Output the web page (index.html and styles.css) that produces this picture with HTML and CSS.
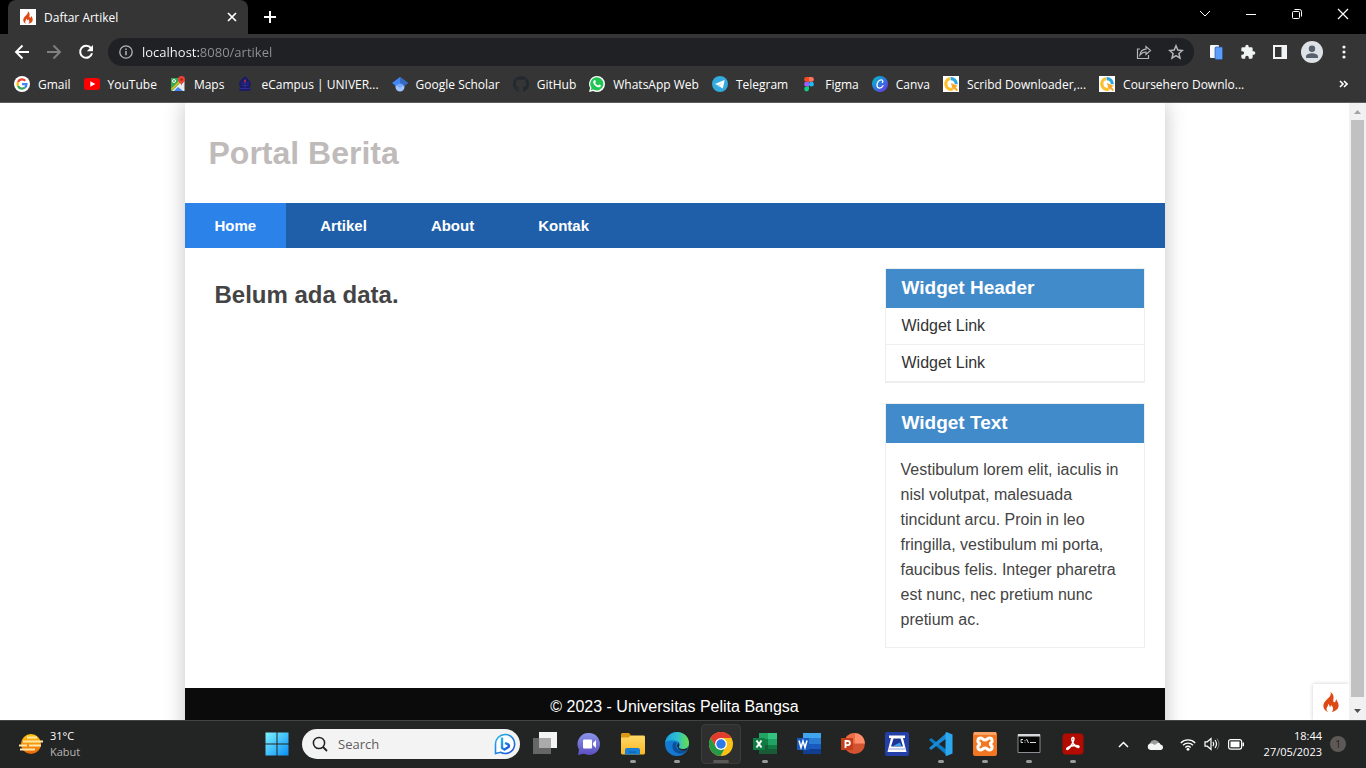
FILE: index.html
```html
<!DOCTYPE html>
<html lang="id">
<head>
<meta charset="utf-8">
<title>Daftar Artikel</title>
<link rel="stylesheet" href="styles.css">
</head>
<body>
<svg class="defs" aria-hidden="true">
  <defs>
    <symbol id="flame" viewBox="0 0 16 20"><path fill="#dd4814" d="M7.6 0c.8 2.600-.4 4.200-2.200 6C3.200 8.200.4 10.600.4 14c0 2.600 1.700 5 4.600 6-1.600-1.300-2-3.200-.8-4.900.7-1 1.100-1.700.9-3 1.300.5 1.700 1.700 1.500 2.900.9-.2 1.400-1 1.300-2.100 1.800 1 3.700 4.700.5 7.100 4-.9 7.200-3 7.200-6.600 0-2.700-1.700-4.200-2.400-6.300-.6 1.300-.4 2.200-1 2.800-.8.700-1.900.1-1.900-1C10.300 6.500 11.900 3.200 7.600 0z"/></symbol>
    <symbol id="qdown" viewBox="0 0 16 16"><path fill="#fff" d="M0 0h16v16H0z"/><path fill="none" stroke="#fbc02d" stroke-width="3.200" d="M7 2.600a5.300 5.300 0 1 0 2.500 10.600"/><path fill="none" stroke="#2aa5e0" stroke-width="3.200" d="M7.600 2.600a5.400 5.400 0 0 1 5.700 5.600"/><path fill="#f9a825" d="m8 7 7 3-2.400 1L15 14l-1.200 1.200L11 12.600l-1 2.200z"/></symbol>
    <linearGradient id="win" x1="0" y1="0" x2="1" y2="1"><stop stop-color="#7df3ff"/><stop offset="1" stop-color="#0a8ff5"/></linearGradient>
    <linearGradient id="sun" x1="0" y1="0" x2="0" y2="1"><stop stop-color="#ffc70f"/><stop offset="1" stop-color="#ee6509"/></linearGradient>
    <linearGradient id="canva" x1="0" y1="0" x2="1" y2="1"><stop stop-color="#00c4cc"/><stop offset=".5" stop-color="#2b78dc"/><stop offset="1" stop-color="#7d2ae8"/></linearGradient>
    <linearGradient id="chat" x1="0" y1="0" x2="0" y2="1"><stop stop-color="#8b94e8"/><stop offset="1" stop-color="#5a4fc0"/></linearGradient>
    <linearGradient id="edge" x1="0" y1="0" x2="1" y2="0"><stop stop-color="#1a9de0"/><stop offset=".5" stop-color="#2cc0d0"/><stop offset="1" stop-color="#6ae045"/></linearGradient>
    <linearGradient id="folder" x1="0" y1="0" x2="0" y2="1"><stop stop-color="#ffd968"/><stop offset="1" stop-color="#fbb722"/></linearGradient>
    <linearGradient id="bing" x1="0" y1="0" x2="1" y2="1"><stop stop-color="#22b8e8"/><stop offset="1" stop-color="#1a4fd8"/></linearGradient>
  </defs>
</svg>

<header class="browser">
  <div class="tabstrip">
    <div class="tab">
      <span class="favicon"><svg width="10" height="13"><use href="#flame"/></svg></span>
      <span class="tab-title">Daftar Artikel</span>
      <button class="plain tab-close" aria-label="Close tab"><svg width="10" height="10" viewBox="0 0 10 10"><path class="line" stroke-width="1.700" d="m1 1 8 8m0-8L1 9"/></svg></button>
    </div>
    <button class="plain new-tab" aria-label="New tab"><svg width="12" height="12" viewBox="0 0 12 12"><path class="line" stroke-width="2" d="M6 0v12M0 6h12"/></svg></button>
    <div class="window-buttons">
      <button class="plain" aria-label="Search tabs"><svg width="12" height="8" viewBox="0 0 12 8"><path class="line" d="m1 1 5 5 5-5"/></svg></button>
      <button class="plain" aria-label="Minimize"><svg width="10" height="10" viewBox="0 0 10 10"><path class="line" d="M0 5.500h10"/></svg></button>
      <button class="plain" aria-label="Restore"><svg width="10" height="10" viewBox="0 0 10 10"><path class="line" d="M2.500.5h5a2 2 0 0 1 2 2v5"/><rect class="line" x=".5" y="2.500" width="7" height="7" rx="1"/></svg></button>
      <button class="plain" aria-label="Close"><svg width="12" height="12" viewBox="0 0 12 12"><path class="line" stroke-width="1.200" d="m1 1 10 10m0-10L1 11"/></svg></button>
    </div>
  </div>

  <div class="toolbar">
    <button class="plain tool" aria-label="Back"><svg width="16" height="16" viewBox="0 0 16 16"><path class="line" stroke-width="1.900" d="M15 8H2m6.500-6.500L2 8l6.500 6.500"/></svg></button>
    <button class="plain tool dim" aria-label="Forward"><svg width="16" height="16" viewBox="0 0 16 16"><path class="line" stroke-width="1.900" d="M1 8h13M7.500 1.500 14 8l-6.500 6.500"/></svg></button>
    <button class="plain tool" aria-label="Reload"><svg width="16" height="16" viewBox="0 0 16 16"><path class="line" stroke-width="2" d="M13 4.200a6 6 0 1 0 1 5"/><path fill="currentColor" d="M15 1v6.200H8.800z"/></svg></button>
    <div class="omnibox">
      <svg width="14" height="14" viewBox="0 0 14 14"><circle class="line" cx="7" cy="7" r="6.200" stroke-width="1.300"/><path class="line" stroke-width="1.500" d="M7 6v4.200M7 3.500V5"/></svg>
      <input class="url" aria-label="Address" value="localhost:8080/artikel">
      <button class="plain" aria-label="Share"><svg width="16" height="16" viewBox="0 0 16 16"><path class="line" stroke-width="1.200" d="M4 5H1.500v9.500h11V11M4 11c.4-4 2.500-5.800 6-5.900V2.500l4.500 4-4.500 4V8C7.500 8 5.600 8.800 4 11z"/></svg></button>
      <button class="plain" aria-label="Bookmark"><svg width="16" height="16" viewBox="0 0 16 16"><path class="line" stroke-width="1.500" d="m8 1.800 1.800 4.300 4.600.4-3.500 3 1.100 4.600-4-2.500-4 2.500 1.100-4.600-3.500-3 4.600-.4z"/></svg></button>
    </div>
    <button class="plain ext" aria-label="Reader extension"><svg width="14" height="16" viewBox="0 0 14 16"><rect x="1" y="1" width="9" height="13" rx="1" fill="#f7f9fb"/><rect x="6" y="3" width="7.500" height="12.500" rx="1" fill="#5c9dfa" stroke="#28569a" stroke-width=".7"/></svg></button>
    <button class="plain ext" aria-label="Extensions"><svg width="16" height="16" viewBox="0 0 24 24"><path fill="#f1f3f4" d="M20.500 11H19V7a2 2 0 0 0-2-2h-4V3.500a2.500 2.500 0 0 0-5 0V5H4a2 2 0 0 0-2 2v3.800h1.500a2.700 2.700 0 0 1 0 5.400H2V20c0 1.100.9 2 2 2h3.800v-1.500a2.700 2.700 0 0 1 5.400 0V22H17a2 2 0 0 0 2-2v-4h1.500a2.500 2.500 0 0 0 0-5z"/></svg></button>
    <button class="plain ext" aria-label="Side panel"><svg width="14" height="14" viewBox="0 0 14 14"><path fill="#f1f3f4" fill-rule="evenodd" d="M0 0h14v14H0zM2 2v10h6.500V2z"/></svg></button>
    <button class="plain ext" aria-label="Profile"><svg width="22" height="22" viewBox="0 0 22 22"><circle cx="11" cy="11" r="11" fill="#dee1e6"/><circle cx="11" cy="7.800" r="3.200" fill="#56606e"/><path fill="#56606e" d="M5 17v-1.500c0-2.200 3.500-3.200 6-3.200s6 1 6 3.200V17z"/></svg></button>
    <button class="plain ext" aria-label="Menu"><svg width="4" height="14" viewBox="0 0 4 14" fill="#f1f3f4"><circle cx="2" cy="2" r="1.600"/><circle cx="2" cy="7" r="1.600"/><circle cx="2" cy="12" r="1.600"/></svg></button>
  </div>

  <nav class="bookmarks" aria-label="Bookmarks">
    <a href="#"><svg viewBox="0 0 16 16"><circle cx="8" cy="8" r="8" fill="#fff"/><g fill="none" stroke-width="2.200"><path stroke="#ea4335" d="M4 6a4.500 4.500 0 0 1 7.300-1.300"/><path stroke="#fbbc05" d="M4 10a4.600 4.600 0 0 1 0-4"/><path stroke="#34a853" d="M4 10a4.500 4.500 0 0 0 7 1.500"/><path stroke="#4285f4" d="M11 11.500a4.500 4.500 0 0 0 1.500-3.300H8"/></g></svg>Gmail</a>
    <a href="#"><svg viewBox="0 0 16 16"><rect y="2" width="16" height="12" rx="3" fill="#f00"/><path fill="#fff" d="m6.300 5.200 5 2.800-5 2.800z"/></svg>YouTube</a>
    <a href="#"><svg viewBox="0 0 16 16"><path fill="#34a853" d="M1 2h13v13H1z"/><path fill="#e8eaed" d="m2 15 11-11 1.500 1.500V15z"/><path fill="#4285f4" d="m4 15 4-4 5 4z"/><path fill="#fbbc05" d="M1 13 11 3l1 1L2 14z"/><circle cx="4" cy="5" r="1.500" fill="none" stroke="#fff"/><path fill="#ea4335" d="M11.500 0A3.500 3.500 0 0 1 15 3.500C15 6 12 7 11.500 9.500 11 7 8 6 8 3.500A3.500 3.500 0 0 1 11.500 0z"/><circle cx="11.500" cy="3.500" r="1.200" fill="#a52714"/></svg>Maps</a>
    <a href="#"><svg viewBox="0 0 16 16"><path fill="#1a1a66" d="m8 0 3 3 3 4-1 5 1 2-4 1H5l-3-1 1-2-1-5 3-4z"/><path fill="none" stroke="#34349a" stroke-width=".8" d="M4 7h8M4.500 9.500h7M3 12.500h10M8 3v9"/><circle cx="8" cy="5" r="1.200" fill="#a52a55"/></svg>eCampus | UNIVER...</a>
    <a href="#"><svg viewBox="0 0 16 16"><path fill="#a0c3ff" d="M3.500 8h9v3a4.500 4.500 0 0 1-9 0z"/><path fill="#76a7fa" d="M4 9a4.500 4.500 0 0 1 8 0l-4 3z"/><path fill="#4285f4" d="m8 1 8 6-4 3a4.400 4.400 0 0 0-8 0L0 7z"/><path fill="#356ac3" d="m8 1 8 6-4 3a5 5 0 0 0-4-3z"/></svg>Google Scholar</a>
    <a href="#"><svg viewBox="0 0 16 16"><path fill="#24292f" d="M8 0C3.600 0 0 3.600 0 8c0 3.500 2.300 6.500 5.500 7.600.4.100.5-.2.500-.4v-1.400c-2.200.5-2.700-1-2.700-1-.4-.9-.9-1.200-.9-1.200-.7-.5.100-.5.100-.5.800.1 1.200.8 1.200.8.700 1.200 1.900.9 2.300.7.100-.5.300-.9.500-1.100-1.800-.2-3.600-.9-3.600-4 0-.9.300-1.600.8-2.100-.1-.2-.4-1 .1-2.100 0 0 .7-.2 2.200.8a7.600 7.600 0 0 1 4 0c1.500-1 2.200-.8 2.200-.8.400 1.100.2 1.900.1 2.100.5.600.8 1.300.8 2.200 0 3.100-1.900 3.700-3.700 3.900.3.300.6.800.6 1.500v2.200c0 .2.100.5.600.4A8 8 0 0 0 8 0z"/></svg>GitHub</a>
    <a href="#"><svg viewBox="0 0 16 16"><path fill="#fff" d="M8 0a8 8 0 0 1 0 16c-1.400 0-2.700-.3-3.800-1L0 16l1.100-4A8 8 0 0 1 8 0z"/><path fill="#20c553" d="M8 1.300a6.600 6.600 0 1 1-3.500 12.300l-2.700.7.700-2.600A6.600 6.600 0 0 1 8 1.300z"/><path fill="#fff" d="M5.300 4.200c.7-.3 1 0 1.500 1.500.1.500-.6.900-.6 1.200.7 1.400 1.600 2 2.900 2.500.5-.2.800-1.100 1.200-1 1.600.8 1.700.8 1.600 1.400-.4 1.600-2.200 1.800-3.700 1.200C6.300 10.200 5 8.600 4.300 7c-.4-1 .1-2.300 1-2.800z"/></svg>WhatsApp Web</a>
    <a href="#"><svg viewBox="0 0 16 16"><circle cx="8" cy="8" r="8" fill="#34aadf"/><path fill="#fff" d="m3 7.900 8.800-3.600c.5-.2.900.1.700.8L11 11.800c-.1.500-.5.600-.9.400L6.200 9.400z"/><path fill="#a9d4ec" d="m6.200 9.400 4.500-3.900-3.600 4.600-.5 1.600z"/></svg>Telegram</a>
    <a href="#"><svg viewBox="0 0 16 16"><path fill="#f24e1e" d="M8 1H5.500a2.400 2.400 0 0 0 0 4.800H8z"/><path fill="#ff7262" d="M8 1h2.500a2.400 2.400 0 0 1 0 4.800H8z"/><path fill="#a259ff" d="M8 5.800H5.500a2.400 2.400 0 0 0 0 4.800H8z"/><circle cx="10.400" cy="8.200" r="2.400" fill="#1abcfe"/><path fill="#0acf83" d="M8 10.600H5.500A2.400 2.400 0 1 0 8 13z"/></svg>Figma</a>
    <a href="#"><svg viewBox="0 0 16 16"><circle cx="8" cy="8" r="8" fill="url(#canva)"/><path fill="none" stroke="#fff" stroke-width="1.300" stroke-linecap="round" d="M10.400 6.500c.7-1 .6-2.600-1-2.700C7 3.700 5 6.500 5 9c0 1.900 1 3.100 2.600 3.100 1.500 0 2.700-1 3.400-2.300"/></svg>Canva</a>
    <a href="#"><svg><use href="#qdown"/></svg>Scribd Downloader,...</a>
    <a href="#"><svg><use href="#qdown"/></svg>Coursehero Downlo...</a>
    <button class="plain more" aria-label="More bookmarks"><svg width="9" height="8" viewBox="0 0 9 8"><path class="line" stroke-width="1.600" d="m1 1 3 3-3 3m4-6 3 3-3 3"/></svg></button>
  </nav>
</header>

<div class="viewport">
  <div class="scroll-area">
    <div class="container">
      <header class="site-header"><h1>Portal Berita</h1></header>
      <nav class="site-nav">
        <a class="active" href="#">Home</a>
        <a href="#">Artikel</a>
        <a href="#">About</a>
        <a href="#">Kontak</a>
      </nav>
      <div class="wrapper">
        <main class="main"><h2>Belum ada data.</h2></main>
        <aside class="sidebar">
          <section class="widget">
            <h3>Widget Header</h3>
            <ul>
              <li><a href="#">Widget Link</a></li>
              <li><a href="#">Widget Link</a></li>
            </ul>
          </section>
          <section class="widget">
            <h3>Widget Text</h3>
            <p>Vestibulum lorem elit, iaculis in nisl volutpat, malesuada tincidunt arcu. Proin in leo fringilla, vestibulum mi porta, faucibus felis. Integer pharetra est nunc, nec pretium nunc pretium ac.</p>
          </section>
        </aside>
      </div>
      <footer class="site-footer"><p>© 2023 - Universitas Pelita Bangsa</p></footer>
    </div>
    <a class="debug" href="#" aria-label="Debug toolbar"><svg width="16" height="20"><use href="#flame"/></svg></a>
  </div>
  <div class="scrollbar" aria-hidden="true">
    <svg width="7" height="4" viewBox="0 0 7 4"><path fill="#a3a3a3" d="M0 4 3.500 0 7 4z"/></svg>
    <div class="thumb"></div>
    <svg width="7" height="4" viewBox="0 0 7 4"><path fill="#505050" d="m0 0 3.500 4L7 0z"/></svg>
  </div>
</div>

<footer class="taskbar">
  <button class="plain weather">
    <svg width="24" height="22" viewBox="0 0 24 22"><circle cx="12" cy="11" r="10" fill="url(#sun)"/><path stroke="#ffe7a8" stroke-width="2" fill="none" d="M8 4.500h10M4 8.500h20M10 12.500h12M0 12.500h8M1 16.500h15"/></svg>
    <span><span class="temp">31°C</span><span class="sky">Kabut</span></span>
  </button>
  <div class="apps">
    <button class="plain app" aria-label="Start"><svg viewBox="0 0 24 24"><path fill="url(#win)" d="M.5.5h11v11H.5zm12 0h11v11h-11zm-12 12h11v11H.5zm12 0h11v11h-11z"/></svg></button>
    <label class="search">
      <svg width="16" height="16" viewBox="0 0 16 16"><circle cx="7" cy="7" r="5.600" fill="none" stroke="#222" stroke-width="1.500"/><path stroke="#222" stroke-width="1.800" d="m11 11 4 4"/></svg>
      <input placeholder="Search" aria-label="Search">
      <svg width="22" height="22" viewBox="0 0 22 22"><path fill="#fff" stroke="url(#bing)" stroke-width="1.600" d="M11 1.500a9.500 9.500 0 1 1-4.500 17.800L1.500 20.500V11A9.500 9.500 0 0 1 11 1.500z"/><path fill="none" stroke="url(#bing)" stroke-width="2.400" stroke-linejoin="round" d="M8 4.500v10.500l2.500 1.500 4-2.500c.8-1.200.4-2.300-.8-2.800L11 10"/></svg>
    </label>
    <button class="plain app" aria-label="Task view"><svg viewBox="0 0 24 24"><path fill="#f3f3f3" d="M6 0h18v16H6z"/><path fill="#666" d="M0 6h18v16H0z"/><path fill="#aaa" d="M6 6h12v10H6z"/></svg></button>
    <button class="plain app" aria-label="Chat"><svg viewBox="0 0 24 24"><path fill="url(#chat)" d="M12 1a11 11 0 1 1-5 20.800L1 23l1-5.500A11 11 0 0 1 12 1z"/><rect x="6" y="7.500" width="9" height="9" rx="1" fill="#fff"/><path fill="#fff" d="m16 11 3-3v8l-3-3z"/></svg></button>
    <button class="plain app open" aria-label="File Explorer"><svg viewBox="0 0 24 24"><path fill="#dc9a14" d="M0 2.500C0 1.700.7 1 1.500 1H8l2 2.500V8H0z"/><path fill="url(#folder)" d="M0 5.500h7.500L10 3.500h12.500c.8 0 1.500.7 1.500 1.500v16c0 .8-.7 1.500-1.500 1.500h-21C.7 22.500 0 21.800 0 21z"/><path fill="#1780d4" d="M4 22.500V18a2 2 0 0 1 2-2h11a2 2 0 0 1 2 2v4.500z"/><path fill="#0b5fae" d="M8 19.500h7v1.200H8z"/></svg></button>
    <button class="plain app open" aria-label="Edge"><svg viewBox="0 0 24 24"><circle cx="12" cy="12" r="12" fill="#1479d0"/><path fill="url(#edge)" d="M.2 10.500C1.200 4.300 6 0 12 0c7 0 12 5 12 11 0 4-2.800 6-6 6-2.500 0-4.500-1-4-2 1.500-2 1-5-2.500-6C7.500 8 2.500 8.500.2 10.500z"/><path fill="#0b4f98" d="M9 10c-2.500 3-2 8 2 10.500 4 2.300 8.500 1 11-2.500-4.500 2-10 1-11-4-.2-1.500.3-2.500 1-3z"/><path fill="#242525" d="M12 13c.8-.6 1.600-1.800 1-3 1 1 1.500 3 .8 4.500-.4 1 .5 2.300 4.200 2.500 2 0 4-.5 5-2l-1 3c-3.800 2-9.500.5-10-5z"/></svg></button>
    <button class="plain app open current" aria-label="Chrome"><svg viewBox="0 0 24 24"><circle cx="12" cy="12" r="12" fill="#fbc116"/><path fill="#e33b2e" d="M1.600 6A12 12 0 0 1 22.400 6H12L7 15z"/><path fill="#249a48" d="M1.600 6 7 15.200l5 2.300 4-1.500-4.500 8A12 12 0 0 1 1.600 6z"/><circle cx="12" cy="12" r="6" fill="#fff"/><circle cx="12" cy="12" r="4.700" fill="#2f78e8"/></svg></button>
    <button class="plain app open" aria-label="Excel"><svg viewBox="0 0 24 24"><path fill="#21a366" d="M6 1h18v21H6z"/><path fill="#33c481" d="M15 1h9v6h-9z"/><path fill="#107c41" d="M6 7h9v6H6zm9 6h9v4h-9z"/><path fill="#185c37" d="M6 13h9v4h9v5H6z"/><path fill="#107c41" d="M0 6h12v12H0z"/><path stroke="#fff" stroke-width="2" d="m3.500 8.500 5 7m0-7-5 7"/></svg></button>
    <button class="plain app" aria-label="Word"><svg viewBox="0 0 24 24"><path fill="#41a5ee" d="M6 1h18v6H6z"/><path fill="#2b7cd3" d="M6 6h18v6H6z"/><path fill="#185abd" d="M6 12h18v5H6z"/><path fill="#103f91" d="M6 17h18v5H6z"/><path fill="#185abd" d="M0 6h12v12H0z"/><path fill="none" stroke="#fff" stroke-width="1.500" d="m2 8.500 2 7 2-6.500 2 6.500 2-7"/></svg></button>
    <button class="plain app" aria-label="PowerPoint"><svg viewBox="0 0 24 24"><circle cx="13.500" cy="11.500" r="10.500" fill="#d35230"/><path fill="#ff8f6b" d="M13.500 1A10.500 10.500 0 0 1 24 11.500H13.500z"/><path fill="#ed6c47" d="M13.500 1v10.500H3A10.500 10.500 0 0 1 13.500 1z"/><path fill="#c43e1c" d="M0 6h12v12H0z"/><path fill="none" stroke="#fff" stroke-width="1.800" d="M4.500 16V9h2.300a2 2 0 0 1 0 4.200H4.500"/></svg></button>
    <button class="plain app" aria-label="Scanner"><svg viewBox="0 0 24 24"><rect width="24" height="24" rx="2" fill="#2440a8"/><path fill="#fff" d="M4 3.500h16V6h-2l3.500 14h-19L6 6H4z"/><path fill="#1c3596" d="M8.500 6.500h7l2.500 8H6z"/><path fill="#3aa0e8" d="M15 10.500 16.500 14H8z"/><path fill="#8fa3da" d="M4 16.500h16v1H4z"/></svg></button>
    <button class="plain app open" aria-label="Visual Studio Code"><svg viewBox="0 0 24 24"><path fill="#0a7bc4" d="m0 8 2-2 16 12v5.500L0 8z"/><path fill="#1a8ad6" d="m0 16 2 2L18 6V.5z"/><path fill="#2aa8f0" d="m17.500 0 6 2.500v19l-6 2.500c-.8-.2-1-.7-1-1.500v-21c0-.8.200-1.300 1-1.500z"/></svg></button>
    <button class="plain app open" aria-label="XAMPP"><svg viewBox="0 0 24 24"><rect width="24" height="24" rx="2" fill="#f37623"/><path fill="#f9a468" d="M1 0h22v3H1z"/><path fill="none" stroke="#fff" stroke-width="3" stroke-linejoin="round" d="M7.500 6c2 0 2.500 2 4.500 2s2.500-2 4.500-2c3 0 3.500 4 1 5.200v1.600c2.500 1.200 2 5.200-1 5.200-2 0-2.500-2-4.500-2s-2.500 2-4.500 2c-3 0-3.500-4-1-5.200v-1.600C4 10 4.500 6 7.500 6z"/></svg></button>
    <button class="plain app open" aria-label="Command Prompt"><svg viewBox="0 0 24 24"><path fill="#050505" stroke="#8a8f94" d="M1 2.500h22v18H1z"/><path fill="#d5d8da" d="M1 2h22v2.500H1z"/><path fill="none" stroke="#ddd" d="M6 7.500H4v3h2M8 8v.8m0 1v.8M9.500 7l2 4M13 10.500h6"/></svg></button>
    <button class="plain app open" aria-label="Acrobat"><svg viewBox="0 0 24 24"><rect x="1.500" y="1.500" width="21" height="21" rx="3.500" fill="#b30b00"/><path fill="none" stroke="#fff" stroke-width="1.500" stroke-linejoin="round" d="M12 5.500c2 0 .5 4-1.500 7.500-2 3.300-4 5-4.700 4.300-.8-1 2-3 6.200-3.500 4-.5 6.500 0 6 1.200-.6 1.200-3-.1-5-2.500-2.300-2.700-3-7-1-7z"/></svg></button>
  </div>
  <div class="tray">
    <button class="plain" aria-label="Hidden icons"><svg width="11" height="7" viewBox="0 0 11 7"><path class="line" stroke-width="1.500" d="m1 6 4.500-4.500L10 6"/></svg></button>
    <svg class="cloud" width="17" height="11" viewBox="0 0 17 11"><path fill="#9c9c9c" d="M3 9a4 4 0 0 1 0-5 5 5 0 0 1 9-.500l2 3.500z"/><path fill="#f4f4f4" d="M3.500 11a3.300 3.300 0 0 1 0-6.500C6 4 7 5.500 8 6c3-3.200 5-2.200 5.500-.5A2.800 2.800 0 0 1 14 11z"/></svg>
    <button class="plain status" aria-label="Network, sound, battery">
      <svg width="16" height="13" viewBox="0 0 16 13"><path class="line" stroke-width="1.300" d="M.8 5a10 10 0 0 1 14.400 0M3 7.200a7 7 0 0 1 10 0M5.300 9.500a4 4 0 0 1 5.400 0"/><circle cx="8" cy="11.300" r="1.400" fill="#fff"/></svg>
      <svg width="16" height="14" viewBox="0 0 16 14"><path class="line" stroke-width="1.200" d="M1 4.800h2.300L7 1.500v11L3.300 9.200H1zM9 4.800q1.500 2.200 0 4.400M11 3q3 4 0 8"/><path stroke="#777" fill="none" d="M13 1.500q4 5.500 0 11"/></svg>
      <svg width="16" height="11" viewBox="0 0 16 11"><rect class="line" x=".6" y=".6" width="13" height="9.500" rx="2" stroke-width="1.200"/><path fill="#fff" d="M2.500 2.500h9v5.700h-9zM14.500 3.500H16v3.700h-1.500z"/></svg>
    </button>
    <button class="plain clock"><span>18:44</span><span>27/05/2023</span></button>
    <button class="plain badge" aria-label="Notifications">1</button>
  </div>
</footer>
</body>
</html>
```
FILE: styles.css
```css
* { box-sizing: border-box; }

body {
  margin: 0;
  height: 100vh;
  display: flex;
  flex-direction: column;
  overflow: hidden;
  background: #fff;
  font-family: "Open Sans", "Noto Sans", sans-serif;
  font-size: 12px;
  color: #fff;
}

a { color: inherit; text-decoration: none; }
svg { flex: none; display: block; }
.defs { position: absolute; width: 0; height: 0; }
.line { fill: none; stroke: currentColor; }

.plain {
  display: flex;
  align-items: center;
  justify-content: center;
  margin: 0;
  padding: 0;
  border: 0;
  background: none;
  font: inherit;
  color: inherit;
}

/* Browser chrome */
.browser { flex: none; background: #353535; border-bottom: 1px solid #5c5c5c; }

.tabstrip { display: flex; height: 34px; background: #000; padding-left: 8px; }
.tab {
  display: flex;
  align-items: center;
  gap: 8px;
  width: 240px;
  padding: 0 10px 0 12px;
  background: #353535;
  border-radius: 8px 8px 0 0;
}
.favicon {
  display: flex;
  align-items: center;
  justify-content: center;
  width: 16px;
  height: 16px;
  background: #fff;
}
.tab-title { flex: 1; }
.tab-close { width: 12px; height: 16px; }
.new-tab { width: 44px; }
.window-buttons { display: flex; margin-left: auto; }
.window-buttons .plain { width: 46px; height: 28px; }

.toolbar { display: flex; align-items: center; height: 36px; padding: 0 6px; }
.tool { width: 32px; height: 32px; }
.dim { color: #808080; }
.omnibox {
  display: flex;
  flex: 1;
  align-items: center;
  gap: 16px;
  height: 28px;
  margin: 0 6px;
  padding: 0 10px 0 11px;
  border-radius: 14px;
  background: #202125;
  color: #b4b6b9;
}
.url {
  flex: 1;
  min-width: 0;
  margin-left: -7px;
  padding: 0;
  border: 0;
  outline: 0;
  background: linear-gradient(90deg, #fff 58px, #909397 58px);
  -webkit-background-clip: text;
  background-clip: text;
  color: transparent;
  font: 13px/20px "Open Sans", "Noto Sans", sans-serif;
}
.ext { width: 32px; height: 32px; }

.bookmarks {
  display: flex;
  align-items: center;
  gap: 13px;
  height: 32px;
  padding: 0 18px 4px 14px;
  white-space: nowrap;
}
.bookmarks a { display: flex; align-items: center; gap: 8px; }
.bookmarks a svg { width: 16px; height: 16px; }
.more { margin-left: auto; }

/* Page */
.viewport {
  flex: 1;
  min-height: 0;
  display: flex;
  font-family: "Liberation Sans", Arial, sans-serif;
  font-size: 16px;
  color: #444;
}
.scroll-area { position: relative; flex: 1; overflow: hidden; }
.container {
  max-width: 980px;
  margin: 0 auto;
  background: #fff;
  box-shadow: 0 0 20px #c4c4c4;
}
.site-header { padding: 32px 24px; }
.site-header h1 { margin: 0; font-size: 32px; line-height: 36px; color: #bfbbbb; }

.site-nav {
  display: flex;
  gap: 4px;
  background: #1f5faa;
  color: #fff;
  font-size: 15px;
  font-weight: bold;
  line-height: 45px;
}
.site-nav a { padding: 0 30px; }
.site-nav .active { background: #2b83ea; }

.wrapper { display: flex; gap: 20px; padding: 20px 20px 40px; }
.main { flex: 1; padding: 10px; }
.main h2 { margin: 0; font-size: 24px; line-height: 34px; }

.sidebar { display: flex; flex-direction: column; gap: 20px; width: 260px; }
.widget { border: 1px solid #eee; }
.widget h3 {
  margin: 0;
  padding: 8px 16px 9px;
  background: #428bca;
  color: #fff;
  font-size: 19px;
  line-height: 22px;
}
.widget ul { margin: 0; padding: 0; list-style: none; }
.widget li { padding: 8px 16px; border-bottom: 1px solid #eee; line-height: 20px; color: #333; }
.widget p { margin: 0; padding: 14px 15px 15px; line-height: 25px; }

.site-footer { padding: 10px 20px 30px; background: #0b0b0b; color: #fff; text-align: center; }
.site-footer p { margin: 0; line-height: 18px; }

.debug {
  position: absolute;
  right: 0;
  bottom: 0;
  display: flex;
  align-items: center;
  justify-content: center;
  width: 36px;
  height: 36px;
  background: #fff;
  box-shadow: 0 0 4px #ccc;
}

.scrollbar {
  display: flex;
  flex-direction: column;
  align-items: center;
  gap: 6px;
  width: 17px;
  padding: 7px 0;
  background: #f1f1f1;
}
.thumb { flex: 1; width: 13px; margin-bottom: 6px; background: #c1c1c1; }

/* Taskbar */
.taskbar {
  flex: none;
  display: flex;
  height: 48px;
  padding-bottom: 1px;
  border-top: 1px solid #444;
  background: #232424;
}
.weather { width: 255px; gap: 7px; padding-left: 19px; justify-content: flex-start; text-align: left; font-size: 11px; line-height: 16px; }
.weather span { display: block; }
.sky { color: #b5b5b5; }
.apps { display: flex; align-items: center; }
.app { position: relative; width: 44px; height: 40px; }
.app svg { width: 24px; height: 24px; }
.open::after {
  content: "";
  position: absolute;
  left: 50%;
  bottom: 1px;
  width: 6px;
  height: 3px;
  margin-left: -3px;
  border-radius: 2px;
  background: #9a9a9a;
}
.current::before {
  content: "";
  position: absolute;
  inset: 0 2px;
  border: 1px solid #3b3b3b;
  border-radius: 4px;
  background: #2f2f2f;
}
.current svg { position: relative; }
.current::after { width: 16px; margin-left: -8px; background: #5c5855; }

.search {
  display: flex;
  align-items: center;
  gap: 10px;
  width: 218px;
  height: 30px;
  margin: 0 3px;
  padding: 0 4px 0 10px;
  border-radius: 15px;
  background: #f3f3f3;
}
.search input {
  flex: 1;
  min-width: 0;
  padding: 0;
  border: 0;
  outline: 0;
  background: none;
  font: 13px/20px "Open Sans", "Noto Sans", sans-serif;
  color: #555;
}
.search input::placeholder { color: #5c5c5c; }

.tray { display: flex; align-items: center; gap: 16px; margin-left: auto; padding-right: 20px; }
.cloud { margin-left: 2px; }
.status { gap: 8px; margin-right: 4px; }
.clock { flex-direction: column; align-items: flex-end; font-size: 11px; line-height: 16px; }
.badge {
  width: 16px;
  height: 16px;
  margin-left: -8px;
  border-radius: 8px;
  background: #5d5957;
  color: #222;
  font-size: 10px;
}
```
